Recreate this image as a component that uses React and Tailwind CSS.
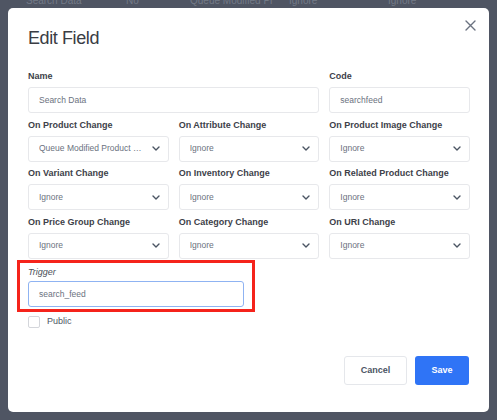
import React from "react";

const Chevron = () => (
  <svg className="w-[8px] h-[5px] shrink-0" viewBox="0 0 8 5" fill="none">
    <path d="M1 1l3 3 3-3" stroke="#4b5563" strokeWidth="1.4" strokeLinecap="round" strokeLinejoin="round" />
  </svg>
);

const Label = ({ children, italic }) => (
  <div
    className={`h-[14px] leading-[14px] text-[9px] text-[#3d4149] mb-[4px] ${
      italic ? "italic font-normal" : "font-bold"
    }`}
  >
    {children}
  </div>
);

const TextBox = ({ value, focus }) => (
  <div
    className={`h-[26px] rounded-[3px] border bg-white px-[10px] flex items-center text-[8.5px] text-[#6b7280] ${
      focus ? "border-[#8fb3f2]" : "border-[#e7e8eb]"
    }`}
  >
    {value}
  </div>
);

const Select = ({ value }) => (
  <div className="h-[26px] rounded-[3px] border border-[#e7e8eb] bg-white pl-[10px] pr-[8px] flex items-center gap-[6px] text-[8.5px] text-[#6b7280]">
    <span className="flex-1 truncate">{value}</span>
    <Chevron />
  </div>
);

const Field = ({ label, children, className = "" }) => (
  <div className={className}>
    <Label>{label}</Label>
    {children}
  </div>
);

const selects = [
  ["On Product Change", "Queue Modified Product Data"],
  ["On Attribute Change", "Ignore"],
  ["On Product Image Change", "Ignore"],
  ["On Variant Change", "Ignore"],
  ["On Inventory Change", "Ignore"],
  ["On Related Product Change", "Ignore"],
  ["On Price Group Change", "Ignore"],
  ["On Category Change", "Ignore"],
  ["On URI Change", "Ignore"],
];

export default function App() {
  return (
    <div
      className="relative h-[420px] w-full overflow-hidden bg-[#4f5563]"
      style={{ fontFamily: '"Liberation Sans", Arial, sans-serif' }}
    >
      {/* page behind the modal */}
      <div className="flex text-[10px] leading-[12px] text-[#737a87] -mt-[5px] pl-[26px]">
        <span className="w-[100px]">Search Data</span>
        <span className="w-[64px]">No</span>
        <span className="w-[99px]">Queue Modified Pr</span>
        <span className="w-[99px]">Ignore</span>
        <span>Ignore</span>
      </div>

      {/* modal */}
      <div className="absolute left-[8px] top-[8px] w-[481px] h-[404px] bg-white rounded-[5px] px-[20px] pt-[18px] pb-[27px] flex flex-col">
        <button className="absolute right-[12px] top-[11px] p-[1px]">
          <svg className="w-[11px] h-[11px]" viewBox="0 0 11 11" fill="none">
            <path d="M1 1l9 9M10 1l-9 9" stroke="#6b7280" strokeWidth="1.4" strokeLinecap="round" />
          </svg>
        </button>

        <h2 className="h-[24px] leading-[24px] text-[18px] tracking-[-0.4px] text-[#3a3d44]">
          Edit Field
        </h2>

        <div className="mt-[19px] grid grid-cols-3 gap-x-[10px] gap-y-[4.5px] w-[442px]">
          <Field label="Name" className="col-span-2">
            <TextBox value="Search Data" />
          </Field>
          <Field label="Code">
            <TextBox value="searchfeed" />
          </Field>
          {selects.map(([label, value]) => (
            <Field key={label} label={label}>
              <Select value={value} />
            </Field>
          ))}
        </div>

        <div className="relative mt-[6.5px] w-[216px]">
          <div className="absolute -top-[5px] -bottom-[5px] -left-[11px] -right-[11px] border-[3px] border-[#f5231b] pointer-events-none" />
          <div className="h-[14px] leading-[14px] text-[9px] italic text-[#4b5059] mb-[2px]">Trigger</div>
          <TextBox value="search_feed" focus />
        </div>

        <label className="mt-[8px] flex items-center gap-[7px]">
          <span className="w-[12px] h-[12px] rounded-[2px] border border-[#d4d6db] bg-white" />
          <span className="text-[9px] text-[#4b5563]">Public</span>
        </label>

        <div className="mt-auto flex justify-end gap-[8px]">
          <button className="w-[63px] h-[29px] rounded-[3px] border border-[#e5e7eb] bg-white text-[9px] font-bold text-[#4b5563]">
            Cancel
          </button>
          <button className="w-[54px] h-[29px] rounded-[3px] bg-[#2f74f6] text-[9px] font-bold text-white">
            Save
          </button>
        </div>
      </div>
    </div>
  );
}
